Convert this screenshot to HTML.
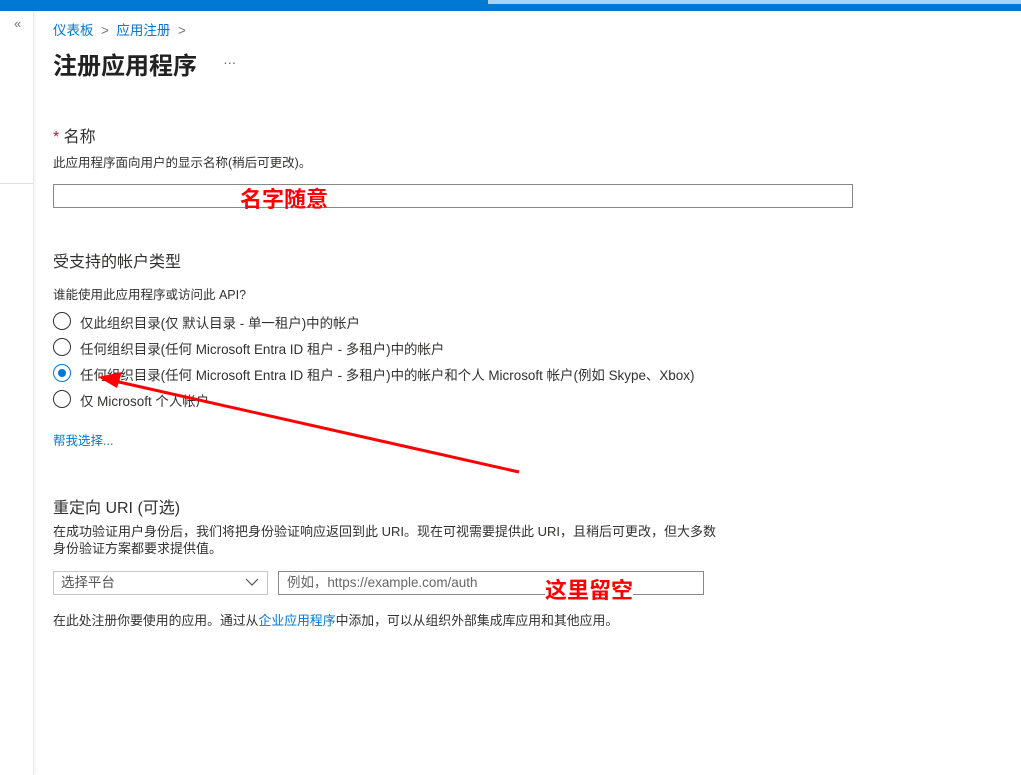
<!DOCTYPE html>
<html><head><meta charset="utf-8"><style>
body{margin:0;width:1021px;height:775px;background:#fff;font-family:"Liberation Sans","Noto Sans CJK SC",sans-serif;color:#323130;position:relative;overflow:hidden;font-size:13.45px}
.a{position:absolute;white-space:nowrap}
.top{position:absolute;left:0;top:0;width:1021px;height:11px;background:#0078d4}
.top2{position:absolute;left:488px;top:0;width:533px;height:4px;background:#a9d3f5}
.side{position:absolute;left:0;top:11px;width:33px;height:764px;border-right:1px solid #e8e8e8;box-shadow:1px 0 3px rgba(0,0,0,.06)}
.link{color:#0078d4}
.radio{position:absolute;left:53px;width:18px;height:18px;border:1px solid #323130;border-radius:50%;box-sizing:border-box}
.red{color:#f00;font-weight:bold;font-size:22px}
</style></head><body>
<div class="top"></div><div class="top2"></div>
<div class="side"></div>
<div class="a" style="left:0;top:183px;width:33px;border-top:1px solid #e1dfdd"></div>
<div class="a" style="left:14px;top:16px;color:#777;font-size:13px">«</div>
<div class="a" style="left:53px;top:19px;font-size:13.5px"><span class="link">仪表板</span> <span style="color:#777">&nbsp;&gt;&nbsp;</span> <span class="link">应用注册</span> <span style="color:#777">&nbsp;&gt;</span></div>
<div class="a" style="left:53px;top:46px;font-size:24px;font-weight:bold;color:#222">注册应用程序</div>
<div class="a" style="left:223px;top:52px;color:#666">…</div>
<div class="a" style="left:53px;top:123px;font-size:16px"><span style="color:#a4262c">*</span> 名称</div>
<div class="a" style="left:53px;top:152px;font-size:12.5px">此应用程序面向用户的显示名称(稍后可更改)。</div>
<div class="a" style="left:53px;top:184px;width:798px;height:22px;border:1px solid #8a8886"></div>
<div class="a red" style="left:240px;top:182px">名字随意</div>
<div class="a" style="left:53px;top:248px;font-size:16px">受支持的帐户类型</div>
<div class="a" style="left:53px;top:284px;font-size:12.5px">谁能使用此应用程序或访问此 API?</div>
<div class="radio" style="top:312px"></div><div class="a" style="left:80px;top:312px">仅此组织目录(仅 默认目录 - 单一租户)中的帐户</div>
<div class="radio" style="top:338px"></div><div class="a" style="left:80px;top:338px">任何组织目录(任何 Microsoft Entra ID 租户 - 多租户)中的帐户</div>
<div class="radio" style="top:364px;border-color:#0078d4"><div style="position:absolute;left:4px;top:4px;width:8px;height:8px;border-radius:50%;background:#0078d4"></div></div><div class="a" style="left:80px;top:364px">任何组织目录(任何 Microsoft Entra ID 租户 - 多租户)中的帐户和个人 Microsoft 帐户(例如 Skype、Xbox)</div>
<div class="radio" style="top:390px"></div><div class="a" style="left:80px;top:390px">仅 Microsoft 个人帐户</div>
<div class="a link" style="left:53px;top:430px;font-size:12.5px">帮我选择...</div>
<div class="a" style="left:53px;top:494px;font-size:16px">重定向 URI (可选)</div>
<div class="a" style="left:53px;top:523px;font-size:13px;line-height:17px">在成功验证用户身份后，我们将把身份验证响应返回到此 URI。现在可视需要提供此 URI，且稍后可更改，但大多数<br>身份验证方案都要求提供值。</div>
<div class="a" style="left:53px;top:571px;height:22px;border:1px solid #c8c6c4;color:#555;line-height:22px;padding-left:7px;width:206px">选择平台</div>
<svg class="a" style="left:245px;top:577px" width="14" height="10"><path d="M1 2 L7 8 L13 2" fill="none" stroke="#555" stroke-width="1.2"/></svg>
<div class="a" style="left:278px;top:571px;width:416px;height:22px;border:1px solid #8a8886;color:#666;line-height:22px;padding-left:8px">例如，https://example.com/auth</div>
<div class="a red" style="left:545px;top:573px;background:#fff">这里留空</div>
<div class="a" style="left:53px;top:610px;font-size:12.85px">在此处注册你要使用的应用。通过从<span class="link">企业应用程序</span>中添加，可以从组织外部集成库应用和其他应用。</div>
<svg class="a" style="left:0;top:0" width="1021" height="775"><line x1="519" y1="472" x2="110" y2="380" stroke="#f00" stroke-width="3"/><path d="M98 377 L122 372 L117 388 Z" fill="#f00"/></svg>
</body></html>
